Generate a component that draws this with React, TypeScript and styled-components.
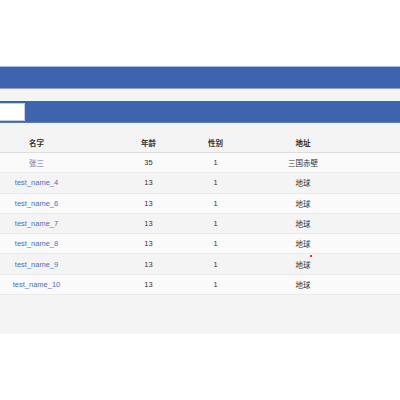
import React from "react";
import styled, { createGlobalStyle } from "styled-components";

const Global = createGlobalStyle`
  html, body { margin: 0; padding: 0; background: #ffffff; }
  body { font-family: "Liberation Sans", Arial, "Noto Sans CJK SC", sans-serif; }
`;

const Page = styled.div`
  padding-top: 66px;
  width: 400px;
`;

const TopBar = styled.div`
  height: 21px;
  background: #3e64ae;
  border-top: 1px solid #aab9db;
  border-bottom: 1px solid #8ea2cf;
`;

const Spacer = styled.div`
  height: 12px;
  background: #f4f4f4;
`;

const ToolBar = styled.div`
  height: 22px;
  background: #3e64ae;
  display: flex;
  align-items: center;
  box-sizing: border-box;
  border-bottom: 1px solid #5d7bbb;
`;

const SearchInput = styled.div`
  width: 25px;
  height: 18px;
  box-sizing: border-box;
  background: #ffffff;
  border: 1px solid #c8cfdd;
  border-left: none;
`;

const TableArea = styled.div`
  background: #f4f4f4;
  padding: 9px 0 39px;
`;

const Row = styled.div<{ $variant: "head" | "light" | "dark" }>`
  display: grid;
  grid-template-columns: 110px 77px 57px 118px 1fr;
  height: ${(p) => (p.$variant === "head" ? "21px" : "20.3px")};
  box-sizing: border-box;
  align-items: center;
  background: ${(p) =>
    p.$variant === "light" ? "#fafafa" : "#f4f4f4"};
  border-bottom: 1px solid
    ${(p) => (p.$variant === "head" ? "#dddddd" : "#ebebeb")};
  font-size: 7.5px;
  font-weight: ${(p) => (p.$variant === "head" ? 700 : 400)};
  color: #333333;
`;

const Cell = styled.div<{ $first?: boolean; $link?: boolean }>`
  position: relative;
  text-align: center;
  padding-right: ${(p) => (p.$first ? "37px" : "0")};
  color: ${(p) => (p.$link ? "#4d6fbf" : "inherit")};
  white-space: nowrap;
`;

const Mark = styled.span`
  position: relative;
  display: inline-block;
`;

const RedDot = styled.span`
  position: absolute;
  right: -1px;
  top: -4px;
  width: 2px;
  height: 2px;
  background: #e8332c;
`;

const rows = [
  { name: "张三", age: "35", sex: "1", addr: "三国赤壁" },
  { name: "test_name_4", age: "13", sex: "1", addr: "地球" },
  { name: "test_name_6", age: "13", sex: "1", addr: "地球" },
  { name: "test_name_7", age: "13", sex: "1", addr: "地球" },
  { name: "test_name_8", age: "13", sex: "1", addr: "地球" },
  { name: "test_name_9", age: "13", sex: "1", addr: "地球", dot: true },
  { name: "test_name_10", age: "13", sex: "1", addr: "地球" },
];

export default function App() {
  return (
    <Page>
      <Global />
      <TopBar />
      <Spacer />
      <ToolBar>
        <SearchInput />
      </ToolBar>
      <TableArea>
        <Row $variant="head">
          <Cell $first>名字</Cell>
          <Cell>年龄</Cell>
          <Cell>性别</Cell>
          <Cell>地址</Cell>
          <Cell />
        </Row>
        {rows.map((r, i) => (
          <Row key={r.name} $variant={i % 2 === 0 ? "light" : "dark"}>
            <Cell $first $link>
              {r.name}
            </Cell>
            <Cell>{r.age}</Cell>
            <Cell>{r.sex}</Cell>
            <Cell>
              <Mark>
                {r.addr}
                {r.dot && <RedDot />}
              </Mark>
            </Cell>
            <Cell />
          </Row>
        ))}
      </TableArea>
    </Page>
  );
}
